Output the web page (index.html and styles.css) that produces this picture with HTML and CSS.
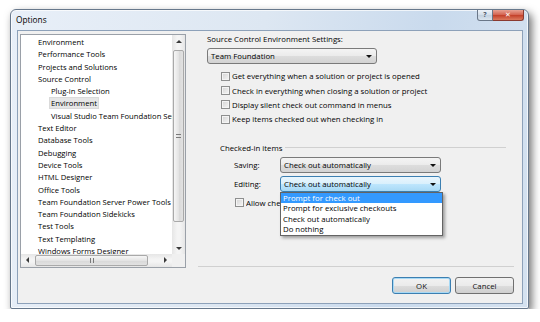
FILE: index.html
```html
<!DOCTYPE html>
<html lang="en">
<head>
    <meta charset="UTF-8">
    <title>Options</title>
    <link rel="stylesheet" href="styles.css">
</head>
<body>
    <div class="window">
        <div class="titlebar">
            <span class="title">Options</span>
            <div class="caption-buttons">
                <span class="cap-btn help">?</span>
                <span class="cap-btn close">&#x2715;</span>
            </div>
        </div>

        <div class="client">
            <div class="tree">
                <ul class="tree-items">
                    <li>Environment</li>
                    <li>Performance Tools</li>
                    <li>Projects and Solutions</li>
                    <li>Source Control</li>
                    <li class="child">Plug-in Selection</li>
                    <li class="child"><span class="selected">Environment</span></li>
                    <li class="child">Visual Studio Team Foundation Server</li>
                    <li>Text Editor</li>
                    <li>Database Tools</li>
                    <li>Debugging</li>
                    <li>Device Tools</li>
                    <li>HTML Designer</li>
                    <li>Office Tools</li>
                    <li>Team Foundation Server Power Tools</li>
                    <li>Team Foundation Sidekicks</li>
                    <li>Test Tools</li>
                    <li>Text Templating</li>
                    <li>Windows Forms Designer</li>
                </ul>
                <div class="vscroll">
                    <span class="sb-btn"><i class="arrow up"></i></span>
                    <span class="sb-track">
                        <span class="thumb v-thumb"><i class="grip"></i></span>
                    </span>
                    <span class="sb-btn"><i class="arrow down"></i></span>
                </div>
                <div class="hscroll">
                    <span class="sb-btn"><i class="arrow left"></i></span>
                    <span class="sb-track">
                        <span class="thumb h-thumb"><i class="grip"></i></span>
                    </span>
                    <span class="sb-btn"><i class="arrow right"></i></span>
                </div>
                <div class="corner"></div>
            </div>

            <div class="settings">
                <div class="label">Source Control Environment Settings:</div>
                <div class="combo wide">Team Foundation</div>

                <div class="checks">
                    <div class="check"><span class="box"></span>Get everything when a solution or project is opened</div>
                    <div class="check"><span class="box"></span>Check in everything when closing a solution or project</div>
                    <div class="check"><span class="box"></span>Display silent check out command in menus</div>
                    <div class="check"><span class="box"></span>Keep items checked out when checking in</div>
                </div>

                <div class="group-head">
                    <span>Checked-in items</span>
                    <span class="group-line"></span>
                </div>

                <div class="field">
                    <span class="field-label">Saving:</span>
                    <div class="combo">Check out automatically</div>
                </div>
                <div class="field">
                    <span class="field-label">Editing:</span>
                    <div class="combo focused">
                        Check out automatically
                        <ul class="dropdown">
                            <li class="active">Prompt for check out</li>
                            <li>Prompt for exclusive checkouts</li>
                            <li>Check out automatically</li>
                            <li>Do nothing</li>
                        </ul>
                    </div>
                </div>
                <div class="check allow"><span class="box"></span><span class="allow-text">Allow checked-in items to be edited</span></div>

                <div class="footer">
                    <button class="btn default">OK</button>
                    <button class="btn">Cancel</button>
                </div>
            </div>
        </div>
    </div>
</body>
</html>
```

FILE: styles.css
```css
body {
    margin: 0;
    background: #fff;
    font-family: "Open Sans", "DejaVu Sans", sans-serif;
    font-size: 7.8px;
    color: #000;
}
.window {
    margin: 9px 0 0 10px;
    width: 519px;
    height: 300px;
    box-sizing: border-box;
    border: 1px solid #67788c;
    border-radius: 6px 6px 2px 2px;
    background: linear-gradient(100deg, #e8eff8 0%, #dde7f2 45%, #c9daed 75%, #d5e2f0 100%);
    box-shadow: 3px 4px 9px rgba(0,0,0,0.55), inset 0 0 0 1px rgba(255,255,255,0.7);
    display: flex;
    flex-direction: column;
}
.titlebar {
    height: 20px;
    display: flex;
    justify-content: space-between;
    align-items: flex-start;
    padding: 0 4px 0 5px;
}
.title {
    margin-top: 4px;
    font-size: 8.3px;
}
.caption-buttons {
    display: flex;
}
.cap-btn {
    height: 10px;
    line-height: 10px;
    text-align: center;
    border: 1px solid #6a7788;
    border-top: none;
    font-size: 7px;
}
.help {
    width: 14px;
    border-radius: 0 0 0 3px;
    color: #4d5b6c;
    font-weight: bold;
    background: linear-gradient(#eef3f9, #d2dde9 50%, #c2d0df 51%, #dbe5ef);
}
.close {
    width: 30px;
    border-left: none;
    border-color: #8a3a30;
    border-radius: 0 0 3px 0;
    color: #fff;
    font-weight: bold;
    background: linear-gradient(#e8a294, #d2604c 50%, #c23e28 51%, #dc7a5e);
}
.client {
    margin: 0 5px 4px 6px;
    flex: 1;
    background: #f0f0f0;
    border: 1px solid #8da1b9;
    display: flex;
    align-items: flex-start;
}

/* tree */
.tree {
    margin: 3px 0 0 2px;
    width: 166px;
    height: 234px;
    box-sizing: border-box;
    border: 1px solid #9aa0a8;
    background: #fff;
    display: grid;
    grid-template-columns: 1fr 13px;
    grid-template-rows: 1fr 13px;
}
.tree-items {
    list-style: none;
    margin: 0;
    padding: 1px 0 0;
    overflow: hidden;
    white-space: nowrap;
    font-size: 7.65px;
}
.tree-items li {
    height: 12.3px;
    line-height: 12.3px;
    padding-left: 17px;
}
.tree-items li.child {
    padding-left: 30px;
}
.selected {
    background: #e6e6e6;
    border: 1px solid #dadada;
    padding: 0 1px;
    margin-left: -2px;
}
.vscroll, .hscroll {
    display: flex;
    background: linear-gradient(90deg, #e6e6e6, #f4f4f4 40%, #f4f4f4 60%, #e6e6e6);
}
.vscroll {
    flex-direction: column;
}
.hscroll {
    background: linear-gradient(#e6e6e6, #f4f4f4 40%, #f4f4f4 60%, #e6e6e6);
}
.sb-btn {
    width: 13px;
    height: 12px;
    display: flex;
    align-items: center;
    justify-content: center;
    flex: none;
}
.sb-track {
    flex: 1;
    display: flex;
}
.vscroll .sb-track {
    flex-direction: column;
}
.thumb {
    box-sizing: border-box;
    border: 1px solid #a9a9a9;
    border-radius: 2px;
    display: flex;
    align-items: center;
    justify-content: center;
}
.v-thumb {
    margin: 3px 1px 0 1px;
    height: 172px;
    background: linear-gradient(90deg, #f6f6f6, #e4e4e4 50%, #d8d8d8 51%, #e2e2e2);
}
.h-thumb {
    margin: 1px 0 1px 1px;
    width: 113px;
    background: linear-gradient(#f6f6f6, #e4e4e4 50%, #d8d8d8 51%, #e2e2e2);
}
.grip {
    width: 5px;
    height: 4px;
    border-top: 1px solid #7a7a7a;
    border-bottom: 1px solid #7a7a7a;
    box-sizing: border-box;
}
.h-thumb .grip {
    width: 4px;
    height: 5px;
    border: none;
    border-left: 1px solid #7a7a7a;
    border-right: 1px solid #7a7a7a;
}
.arrow {
    width: 0;
    height: 0;
    border: 3px solid transparent;
}
.arrow.up { border-bottom: 3px solid #3a3a3a; border-top-width: 0; }
.arrow.down { border-top: 3px solid #3a3a3a; border-bottom-width: 0; }
.arrow.left { border-right: 3px solid #3a3a3a; border-left-width: 0; }
.arrow.right { border-left: 3px solid #3a3a3a; border-right-width: 0; }
.corner {
    background: #f0f0f0;
}

/* settings pane */
.settings {
    margin-left: 12px;
    width: 316px;
    height: 100%;
    display: flex;
    flex-direction: column;
}
.label {
    margin: 2px 0 0 9px;
    line-height: 12px;
}
.combo {
    position: relative;
    box-sizing: border-box;
    height: 16px;
    line-height: 14px;
    padding-left: 3px;
    border: 1px solid #7a7a7a;
    border-radius: 3px;
    background: linear-gradient(#f4f4f4, #ebebeb 50%, #dddddd 51%, #d3d3d3);
}
.combo::after {
    content: "";
    position: absolute;
    right: 4px;
    top: 6px;
    border: 3px solid transparent;
    border-top: 3px solid #111;
    border-bottom-width: 0;
}
.combo.wide {
    margin: 3px 0 0 9px;
    width: 170px;
}
.checks {
    margin: 5px 0 0 23px;
}
.check {
    height: 14.4px;
    display: flex;
    align-items: center;
    white-space: nowrap;
}
.box {
    width: 9px;
    height: 9px;
    box-sizing: border-box;
    border: 1px solid #8e8f8f;
    background: linear-gradient(135deg, #d3d3d3, #f6f6f6);
    box-shadow: inset 0 0 0 1px #f4f4f4;
    margin-right: 2px;
    flex: none;
}
.group-head {
    margin: 15px 8px 0 22px;
    display: flex;
    align-items: center;
    line-height: 12px;
}
.group-line {
    flex: 1;
    margin-left: 3px;
    border-top: 1px solid #d0d0d0;
}
.field {
    margin: 3px 0 0 36px;
    display: flex;
    align-items: center;
}
.field-label {
    width: 46px;
}
.field .combo {
    width: 161px;
}
.combo.focused {
    border-color: #3c7fb1;
    background: linear-gradient(#eaf6fd, #d9f0fc 50%, #bee6fd 51%, #a7d9f5);
}
.dropdown {
    position: absolute;
    left: -1px;
    top: 15px;
    width: 161px;
    margin: 0;
    padding: 0;
    list-style: none;
    background: #fff;
    border: 1px solid #646464;
    box-shadow: 2px 2px 3px rgba(0,0,0,0.35);
    z-index: 2;
    line-height: 10.6px;
}
.dropdown li {
    padding-left: 2px;
    height: 10.6px;
}
.dropdown li.active {
    background: #3399ff;
    color: #fff;
}
.check.allow {
    margin: 5px 0 0 37px;
    height: 12px;
}
.allow-text {
    width: 34px;
    overflow: hidden;
}
.footer {
    margin-top: auto;
    margin-bottom: 9px;
    padding-top: 10px;
    border-top: 1px solid #d0d0d0;
    display: flex;
    justify-content: flex-end;
    gap: 4px;
}
.btn {
    width: 59px;
    height: 17px;
    padding: 0;
    font-family: inherit;
    font-size: 7.8px;
    color: #111;
    border: 1px solid #707070;
    border-radius: 3px;
    background: linear-gradient(#f2f2f2, #ebebeb 50%, #dddddd 51%, #cfcfcf);
}
.btn.default {
    border-color: #3c7fb1;
    box-shadow: inset 0 0 0 1px #a7d9f5;
}
```
